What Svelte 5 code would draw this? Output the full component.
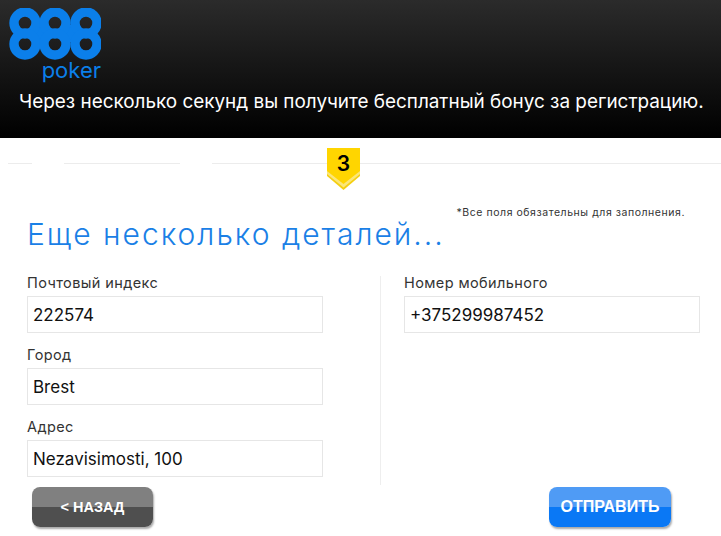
<script>
    const leftFields = [
        { label: 'Почтовый индекс', value: '222574' },
        { label: 'Город', value: 'Brest' },
        { label: 'Адрес', value: 'Nezavisimosti, 100' }
    ];
    const rightFields = [{ label: 'Номер мобильного', value: '+375299987452' }];
    const cols = [16, 46, 77];
</script>

<div class="page">
    <header class="header">
        <div class="logo">
            <svg width="92" height="52" viewBox="0 0 92 52">
                <rect x="26" y="17" width="10" height="17" fill="#0b7fea"></rect>
                <rect x="56.5" y="17" width="10" height="17" fill="#0b7fea"></rect>
                {#each cols as x}
                    <circle cx={x} cy="15" r="11" fill="none" stroke="#0b7fea" stroke-width="9.4"></circle>
                    <circle cx={x} cy="36" r="11" fill="none" stroke="#0b7fea" stroke-width="9.4"></circle>
                {/each}
            </svg>
            <span class="poker">poker</span>
        </div>
        <p class="promo">Через несколько секунд вы получите бесплатный бонус за регистрацию.</p>
    </header>

    <div class="steps">
        <span class="seg s1"></span>
        <span class="seg s2"></span>
        <span class="seg s3"></span>
        <div class="badge">
            <svg width="33" height="42" viewBox="0 0 33 42">
                <polygon points="0,0 33,0 33,28 16.5,42 0,28" fill="#f5cf10"></polygon>
                <polygon points="0,26 16.5,39.5 33,26 33,23 0,23" fill="#fbe678"></polygon>
                <polygon points="0,0 33,0 33,23 16.5,36 0,23" fill="#ffd500"></polygon>
            </svg>
            <span>3</span>
        </div>
        <span class="seg s4"></span>
    </div>

    <p class="note">*Все поля обязательны для заполнения.</p>
    <h1>Еще несколько деталей...</h1>

    <div class="columns">
        <div class="col">
            {#each leftFields as f}
                <label class="field">
                    <span>{f.label}</span>
                    <input type="text" value={f.value} />
                </label>
            {/each}
        </div>
        <div class="col right">
            {#each rightFields as f}
                <label class="field">
                    <span>{f.label}</span>
                    <input type="text" value={f.value} />
                </label>
            {/each}
        </div>
    </div>

    <div class="actions">
        <button class="btn back">&lt; НАЗАД</button>
        <button class="btn send">ОТПРАВИТЬ</button>
    </div>
</div>

<style>
    :global(body) {
        margin: 0;
        background: #fff;
    }
    .page {
        width: 721px;
        height: 536px;
        overflow: hidden;
        font-family: "Inter", "Liberation Sans", sans-serif;
    }

    .header {
        height: 138px;
        box-sizing: border-box;
        padding: 8px 0 0 9px;
        background: linear-gradient(#2b2b2b, #000);
    }
    .logo {
        display: flex;
        flex-direction: column;
        width: 92px;
        height: 84px;
    }
    .logo svg {
        display: block;
    }
    .poker {
        font-family: "Inter", sans-serif;
        font-size: 22px;
        line-height: 22px;
        color: #0b7fea;
        align-self: flex-end;
        margin-top: -1px;
    }
    .promo {
        margin: -2px 0 0 10px;
        color: #fff;
        font-size: 18.9px;
        line-height: 24px;
        white-space: nowrap;
    }

    .steps {
        display: flex;
        align-items: flex-start;
        height: 42px;
        margin-top: 10px;
        padding-left: 8px;
    }
    .seg {
        height: 1px;
        margin-top: 15px;
        background: #ececec;
    }
    .s1 { width: 24px; margin-right: 32px; }
    .s2 { width: 116px; margin-right: 32px; }
    .s3 { width: 115px; }
    .s4 { flex: 1; }
    .badge {
        position: relative;
        width: 33px;
        height: 42px;
        display: flex;
        justify-content: center;
        color: #000;
        font-size: 21px;
        font-weight: 600;
        line-height: 31px;
    }
    .badge svg {
        position: absolute;
        top: 0;
        left: 0;
    }
    .badge span {
        position: relative;
    }

    .note {
        margin: 16px 36px 0 0;
        text-align: right;
        font-size: 10.5px;
        line-height: 13px;
        color: #333;
        letter-spacing: 0.55px;
    }
    h1 {
        margin: -4px 0 0 27px;
        font-size: 30px;
        line-height: 38px;
        font-weight: 300;
        letter-spacing: 2px;
        color: #1a80e6;
        white-space: nowrap;
    }

    .columns {
        display: flex;
        margin-top: 23px;
        padding-left: 27px;
        height: 209px;
    }
    .col {
        width: 296px;
        padding-right: 57px;
    }
    .col.right {
        padding: 0 0 0 23px;
        border-left: 1px solid #eee;
    }
    .field {
        display: block;
        margin-bottom: 15px;
    }
    .field span {
        display: block;
        margin-bottom: 6px;
        font-size: 14.5px;
        line-height: 14px;
        color: #333;
        letter-spacing: 0.4px;
    }
    .field input {
        display: block;
        width: 296px;
        height: 37px;
        box-sizing: border-box;
        padding: 0 5px;
        border: 1px solid #e6e6e6;
        background: #fff;
        font-family: inherit;
        font-size: 17px;
        color: #111;
        outline: none;
    }

    .actions {
        display: flex;
        justify-content: space-between;
        padding: 2px 50px 0 32px;
    }
    .btn {
        height: 40px;
        border: none;
        border-radius: 8px;
        color: #fff;
        font-family: "Liberation Sans", sans-serif;
        font-weight: 700;
        box-shadow: 1px 2px 2px #aaa;
    }
    .back {
        width: 121px;
        font-size: 14.5px;
        background: linear-gradient(#808080 50%, #4f4f4f 50%);
    }
    .send {
        width: 122px;
        font-size: 16px;
        background: linear-gradient(#4f9bf5 50%, #0a78f5 50%);
    }
</style>
